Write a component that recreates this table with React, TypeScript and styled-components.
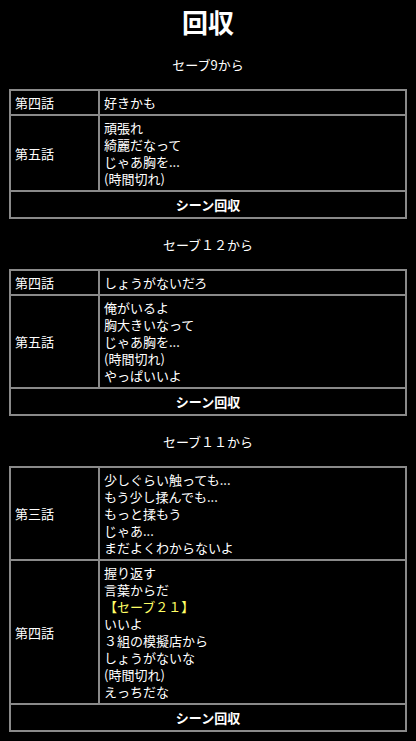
import React from 'react'
import styled, { createGlobalStyle } from 'styled-components'

const GlobalStyle = createGlobalStyle`
  body {
    margin: 0;
    background: #000;
    color: #fff;
    font-family: "Noto Sans CJK JP", "Noto Sans", sans-serif;
  }
`

const Page = styled.div`
  padding: 6px 9px 8px;
`

const Title = styled.h1`
  margin: 0;
  text-align: center;
  font-size: 26px;
  line-height: 32px;
  font-weight: bold;
`

const Subtitle = styled.p`
  margin: 18px 0 16px;
  text-align: center;
  font-size: 13px;
  line-height: 17px;
`

const Section = styled.section`
  & + & ${Subtitle} {
    margin-top: 17px;
  }
`

const Table = styled.table`
  width: 100%;
  border: 1px solid #8a8a8a;
  border-spacing: 0;
  font-size: 13px;
  line-height: 17px;
`

const Cell = styled.td<{ $head?: boolean }>`
  border: 1px solid #8a8a8a;
  padding: 3px 4px;
  vertical-align: middle;
  width: ${(p) => (p.$head ? '79px' : 'auto')};
`

const FooterCell = styled.td`
  border: 1px solid #8a8a8a;
  padding: 4px 4px;
  text-align: center;
  font-weight: bold;
`

const Line = styled.div<{ $mark?: boolean }>`
  color: ${(p) => (p.$mark ? '#ffff66' : '#fff')};
`

type Row = { ep: string; lines: string[] }
type Block = { title: string; rows: Row[] }

const blocks: Block[] = [
  {
    title: 'セーブ9から',
    rows: [
      { ep: '第四話', lines: ['好きかも'] },
      { ep: '第五話', lines: ['頑張れ', '綺麗だなって', 'じゃあ胸を...', '(時間切れ)'] },
    ],
  },
  {
    title: 'セーブ１２から',
    rows: [
      { ep: '第四話', lines: ['しょうがないだろ'] },
      {
        ep: '第五話',
        lines: ['俺がいるよ', '胸大きいなって', 'じゃあ胸を...', '(時間切れ)', 'やっぱいいよ'],
      },
    ],
  },
  {
    title: 'セーブ１１から',
    rows: [
      {
        ep: '第三話',
        lines: ['少しぐらい触っても...', 'もう少し揉んでも...', 'もっと揉もう', 'じゃあ...', 'まだよくわからないよ'],
      },
      {
        ep: '第四話',
        lines: [
          '握り返す',
          '言葉からだ',
          '【セーブ２１】',
          'いいよ',
          '３組の模擬店から',
          'しょうがないな',
          '(時間切れ)',
          'えっちだな',
        ],
      },
    ],
  },
]

const App = () => {
  return (
    <Page>
      <GlobalStyle />
      <Title>回収</Title>
      {blocks.map((b) => (
        <Section key={b.title}>
          <Subtitle>{b.title}</Subtitle>
          <Table>
            <tbody>
              {b.rows.map((r) => (
                <tr key={r.ep}>
                  <Cell $head>{r.ep}</Cell>
                  <Cell>
                    {r.lines.map((l, i) => (
                      <Line key={i} $mark={l.startsWith('【')}>
                        {l}
                      </Line>
                    ))}
                  </Cell>
                </tr>
              ))}
              <tr>
                <FooterCell colSpan={2}>シーン回収</FooterCell>
              </tr>
            </tbody>
          </Table>
        </Section>
      ))}
    </Page>
  )
}

export default App
